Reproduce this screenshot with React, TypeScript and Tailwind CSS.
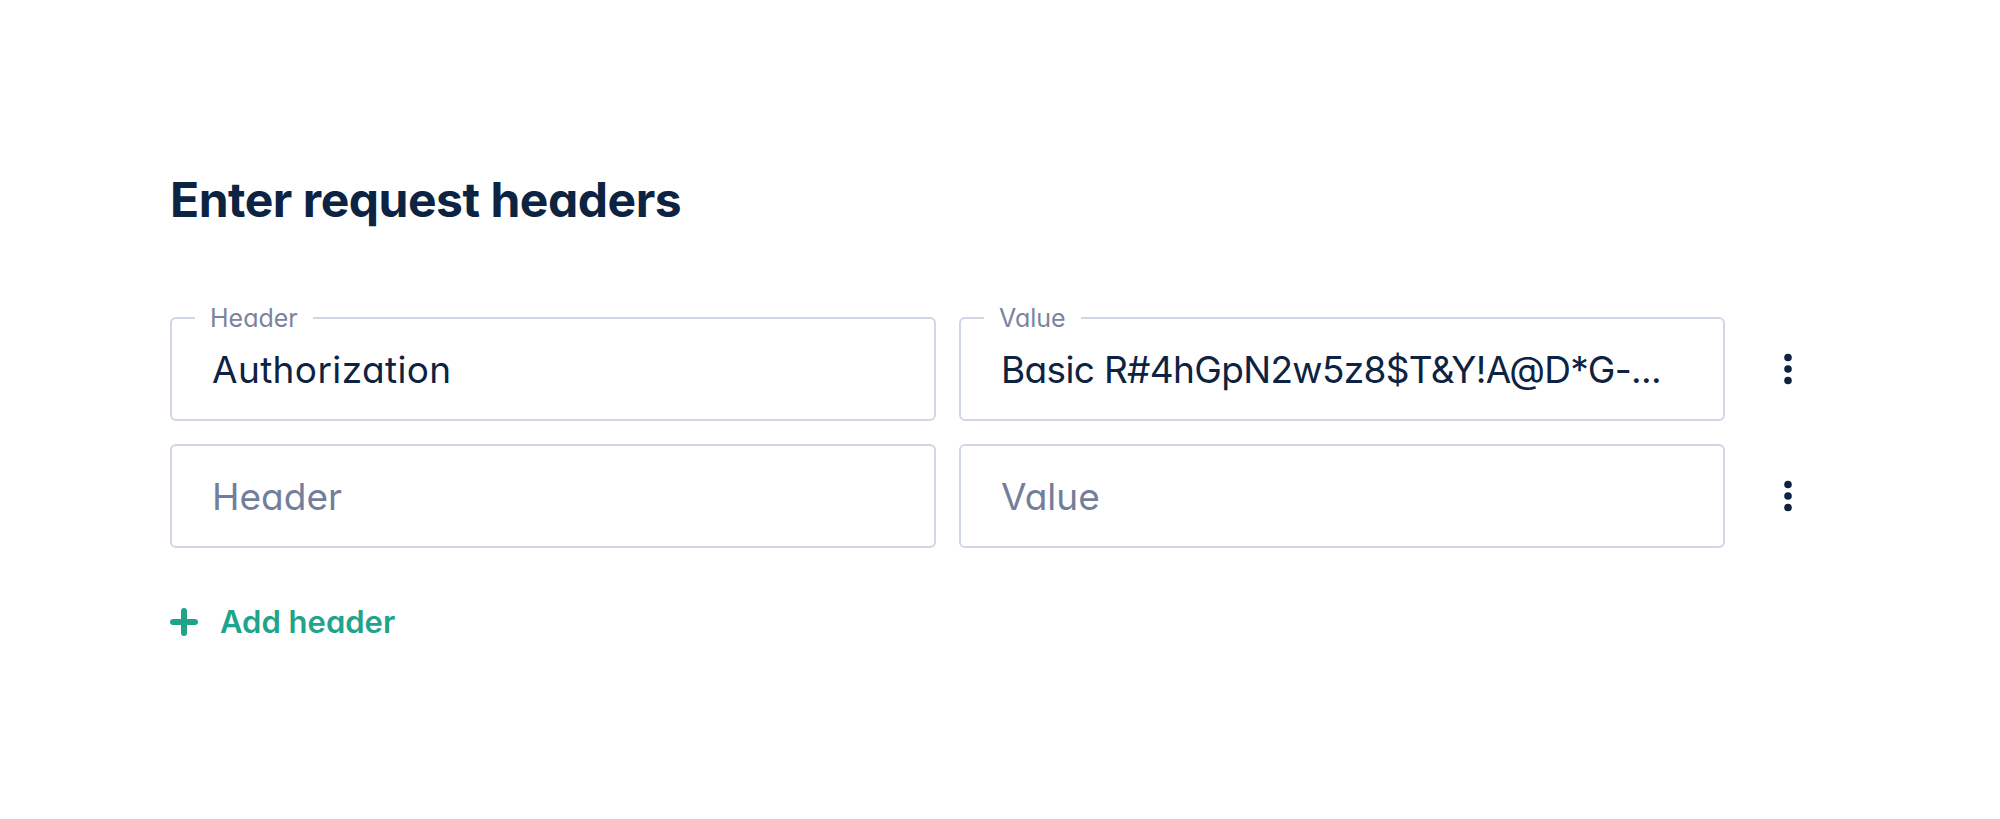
import { useState } from 'react';

type Row = { key: string; value: string };

const Dots = () => (
  <svg width="8" height="32" viewBox="0 0 8 32" className="text-[#0d2341]" fill="currentColor">
    <circle cx="4" cy="4.5" r="3.8" />
    <circle cx="4" cy="16" r="3.8" />
    <circle cx="4" cy="27.5" r="3.8" />
  </svg>
);

const Plus = () => (
  <svg width="28" height="28" viewBox="0 0 28 28" className="text-[#1fa38b]">
    <path d="M14 3v22M3 14h22" stroke="currentColor" strokeWidth="6" strokeLinecap="round" />
  </svg>
);

const Field = ({
  label,
  value,
  placeholder,
  tight,
}: {
  label?: string;
  value: string;
  placeholder: string;
  tight?: boolean;
}) => (
  <div className="relative h-[104px] rounded-[6px] border-2 border-[#cfd6e4] bg-white">
    {label && (
      <span className="absolute left-[23px] top-[-1px] -translate-y-1/2 bg-white px-[15px] text-[25px] leading-none text-[#7a84a1]">
        {label}
      </span>
    )}
    <input
      readOnly
      value={value}
      placeholder={placeholder}
      className={
        tight
          ? 'h-full w-full bg-transparent px-[40px] text-[37px] tracking-[-0.018em] text-[#0d2341] outline-none placeholder:tracking-normal placeholder:text-[#737e9c]'
          : 'h-full w-full bg-transparent px-[40px] text-[37px] tracking-[0.01em] text-[#0d2341] outline-none placeholder:tracking-normal placeholder:text-[#737e9c]'
      }
    />
  </div>
);

export default function App() {
  const [rows] = useState<Row[]>([
    { key: 'Authorization', value: 'Basic R#4hGpN2w5z8$T&Y!A@D*G-...' },
    { key: '', value: '' },
  ]);

  return (
    <div className="min-h-screen bg-white px-[170px] pt-[176px] font-['Inter',sans-serif] [font-feature-settings:'cv11']">
      <h1 className="text-[48px] font-bold leading-none tracking-[-0.01em] text-[#0c2341]">Enter request headers</h1>

      <div className="mt-[93px] grid grid-cols-[766px_766px_80px] gap-x-[23px] gap-y-[23px]">
        {rows.map((row, i) => (
          <div key={i} className="contents">
            <Field label={row.key ? 'Header' : undefined} value={row.key} placeholder="Header" />
            <Field label={row.value ? 'Value' : undefined} value={row.value} placeholder="Value" tight />
            <button className="flex items-center justify-center">
              <Dots />
            </button>
          </div>
        ))}
      </div>

      <button className="mt-[56px] flex h-[36px] items-center gap-[22px] text-[31px] font-semibold text-[#1fa38b]">
        <Plus />
        Add header
      </button>
    </div>
  );
}
